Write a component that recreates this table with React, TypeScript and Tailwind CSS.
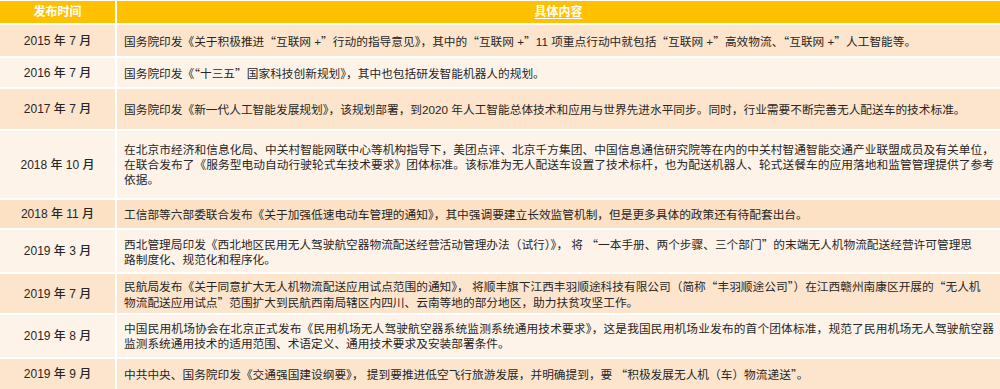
const rows = [
  {
    date: "2015 年 7 月",
    h: "h-[31px]",
    bg: "bg-[#fde5cd]",
    text: "国务院印发《关于积极推进“互联网 +”行动的指导意见》，其中的“互联网 +”11 项重点行动中就包括“互联网 +”高效物流、“互联网 +”人工智能等。",
  },
  {
    date: "2016 年 7 月",
    h: "h-[29px]",
    bg: "bg-[#fef3e8]",
    text: "国务院印发《“十三五”国家科技创新规划》，其中也包括研发智能机器人的规划。",
  },
  {
    date: "2017 年 7 月",
    h: "h-[40px]",
    bg: "bg-[#fde5cd]",
    text: "国务院印发《新一代人工智能发展规划》，该规划部署，到2020 年人工智能总体技术和应用与世界先进水平同步。同时，行业需要不断完善无人配送车的技术标准。",
  },
  {
    date: "2018 年 10 月",
    h: "h-[67px]",
    bg: "bg-[#fef3e8]",
    text: "在北京市经济和信息化局、中关村智能网联中心等机构指导下，美团点评、北京千方集团、中国信息通信研究院等在内的中关村智通智能交通产业联盟成员及有关单位，在联合发布了《服务型电动自动行驶轮式车技术要求》团体标准。该标准为无人配送车设置了技术标杆，也为配送机器人、轮式送餐车的应用落地和监管管理提供了参考依据。",
  },
  {
    date: "2018 年 11 月",
    h: "h-[28px]",
    bg: "bg-[#fce1c5]",
    text: "工信部等六部委联合发布《关于加强低速电动车管理的通知》，其中强调要建立长效监管机制，但是更多具体的政策还有待配套出台。",
  },
  {
    date: "2019 年 3 月",
    h: "h-[42px]",
    bg: "bg-[#fef3e8]",
    text: "西北管理局印发《西北地区民用无人驾驶航空器物流配送经营活动管理办法（试行）》， 将 “一本手册、两个步骤、三个部门”的末端无人机物流配送经营许可管理思\n路制度化、规范化和程序化。",
  },
  {
    date: "2019 年 7 月",
    h: "h-[39px]",
    bg: "bg-[#fde5cd]",
    text: "民航局发布《关于同意扩大无人机物流配送应用试点范围的通知》， 将顺丰旗下江西丰羽顺途科技有限公司（简称“丰羽顺途公司”）在江西赣州南康区开展的“无人机\n物流配送应用试点”范围扩大到民航西南局辖区内四川、云南等地的部分地区，助力扶贫攻坚工作。",
  },
  {
    date: "2019 年 8 月",
    h: "h-[42px]",
    bg: "bg-[#fef3e8]",
    text: "中国民用机场协会在北京正式发布《民用机场无人驾驶航空器系统监测系统通用技术要求》，这是我国民用机场业发布的首个团体标准，规范了民用机场无人驾驶航空器监测系统通用技术的适用范围、术语定义、通用技术要求及安装部署条件。",
  },
  {
    date: "2019 年 9 月",
    h: "h-[30px]",
    bg: "bg-[#fde5cd]",
    text: "中共中央、国务院印发《交通强国建设纲要》， 提到要推进低空飞行旅游发展，并明确提到，要 “积极发展无人机（车）物流递送”。",
  },
];

// quotes in the source are full-width, so render them with the CJK face
const withQuotes = (s: string) =>
  s.split(/([“”])/).map((part, i) =>
    part === "“" || part === "”" ? (
      <span key={i} className="font-['Noto_Sans_CJK_SC',sans-serif]">
        {part}
      </span>
    ) : (
      part
    )
  );

const App = () => {
  return (
    <div className="w-[1000px] h-[389px] overflow-hidden bg-white pt-px flex flex-col gap-[2px] font-['Liberation_Sans','Noto_Sans_CJK_SC',sans-serif] text-[#262626]">
      <div className="grid grid-cols-[115px_1fr] gap-[2px] h-[22px] shrink-0">
        <div className="bg-[#ffc000] flex items-center justify-center text-white font-bold text-[12px]">
          发布时间
        </div>
        <div className="bg-[#ffc000] flex items-center justify-center text-white font-bold text-[12px]">
          <span className="underline underline-offset-2">具体内容</span>
        </div>
      </div>
      {rows.map((r) => (
        <div key={r.date} className={`grid grid-cols-[115px_1fr] gap-[2px] shrink-0 ${r.h}`}>
          <div className={`${r.bg} flex items-center justify-center text-[12px] font-medium`}>
            {r.date}
          </div>
          <div className={`${r.bg} flex items-center pl-[7px] pr-[6px]`}>
            <p className="text-[11.7px] leading-[15px] text-justify">
              {r.text.split("\n").map((line, i) => (
                <span key={i}>
                  {i > 0 && <br />}
                  {withQuotes(line)}
                </span>
              ))}
            </p>
          </div>
        </div>
      ))}
    </div>
  );
};

export default App;
